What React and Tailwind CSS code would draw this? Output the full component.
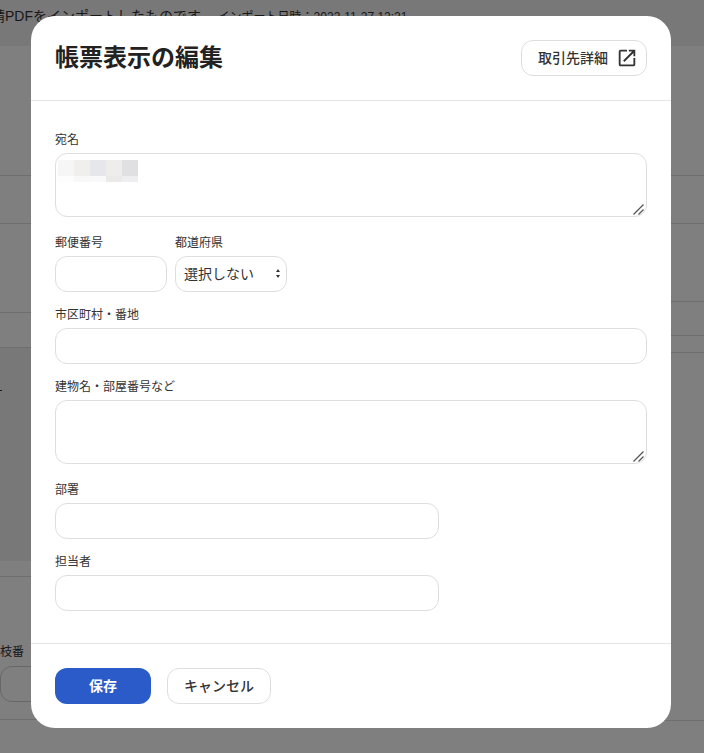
import { MdOpenInNew } from "react-icons/md";

const font = { fontFamily: '"Liberation Sans", "Noto Sans CJK JP", sans-serif' };

const fieldClass =
  "block w-full rounded-xl border border-[#dedede] bg-white px-2 text-sm text-[#333] outline-none";

function Label({ children }) {
  return <label className="mb-1 block h-5 pt-0.5 text-xs leading-[18px] text-[#333]">{children}</label>;
}

function Field({ label, className = "" }) {
  return (
    <div className={className}>
      <Label>{label}</Label>
      <input type="text" className={`${fieldClass} h-9`} />
    </div>
  );
}

function TextArea({ children }) {
  return (
    <div className="relative">
      <textarea className={`${fieldClass} h-16 resize-none py-1.5`} />
      {children}
      <svg
        className="pointer-events-none absolute bottom-0 right-0"
        width="16"
        height="16"
        viewBox="0 0 16 16"
        fill="none"
        stroke="#555"
        strokeWidth="1.3"
      >
        <path d="M2.5 13.5 12.5 3.5M7.5 13.5 12.5 8.5" />
      </svg>
    </div>
  );
}

function Mosaic() {
  const top = ["bg-[#f6f6f6]", "bg-[#f0efee]", "bg-[#e6e7ea]", "bg-[#eeedeb]", "bg-[#e0e0e3]"];
  const bottom = ["bg-[#fdfdfd]", "bg-[#f8f8f8]", "bg-[#f9f9f9]", "bg-[#ebeae8]", "bg-[#eeeef0]"];
  return (
    <div className="pointer-events-none absolute left-[3px] top-[7px] w-20">
      <div className="flex h-4">
        {top.map((c, i) => (
          <div key={i} className={`w-4 ${c}`} />
        ))}
      </div>
      <div className="flex h-1.5">
        {bottom.map((c, i) => (
          <div key={i} className={`w-4 ${c}`} />
        ))}
      </div>
    </div>
  );
}

function PageBehind() {
  return (
    <div className="h-[753px] overflow-hidden bg-white text-sm text-[#333]">
      <div className="h-[46px] overflow-hidden bg-[#f0f0f0] pt-[5px]">
        <p className="-ml-[9px] whitespace-nowrap leading-[22px]">
          請PDFをインポートしたものです。
          <span className="ml-1 text-xs">インポート日時：2022-11-27 12:21</span>
        </p>
      </div>
      <div className="flex">
        <div className="w-[352px]">
          <div className="h-[130px] border-b border-[#dedede]" />
          <div className="h-[48px] border-b border-[#dedede]" />
          <div className="h-[89px] border-b border-[#dedede]" />
          <div className="h-[35px] border-b border-[#dedede]" />
          <div className="h-[213px] bg-[#f0f0f0] pt-[42px]">
            <div className="h-px w-0.5 bg-[#333]" />
          </div>
          <div className="h-[16px] border-b border-[#dedede]" />
          <div className="h-[143px] border-b border-[#dedede] pt-[65px]">
            <p className="h-[20px] text-xs leading-[20px]">枝番</p>
            <div className="mt-[4px] h-9 w-[200px] rounded-xl border border-[#cfcfcf]" />
          </div>
        </div>
        <div className="flex-1">
          <div className="h-[130px] border-b border-[#dedede]" />
          <div className="h-[48px] border-b border-[#dedede]" />
          <div className="h-[78px] border-b border-[#dedede]" />
          <div className="h-[34px] border-b border-[#dedede]" />
          <div className="h-[17px] border-b border-[#dedede]" />
          <div className="h-[368px] border-b border-[#dedede]" />
        </div>
      </div>
    </div>
  );
}

export default function App() {
  return (
    <div className="relative h-[753px] w-full overflow-hidden" style={font}>
      <PageBehind />
      <div className="absolute inset-0 bg-black/50 pl-[31px] pt-4">
        <div className="flex h-[712px] w-[640px] flex-col rounded-3xl bg-white">
          <div className="flex h-[85px] shrink-0 items-start justify-between border-b border-[#e6e6e6] px-6 pt-6">
            <h2 className="text-2xl leading-9 font-bold text-[#222]">帳票表示の編集</h2>
            <button className="flex h-9 w-[126px] items-center gap-[8px] rounded-xl border border-[#dedede] bg-white pl-4 text-sm font-medium text-[#333]">
              取引先詳細
              <MdOpenInNew className="h-[22px] w-[22px] text-[#333]" />
            </button>
          </div>

          <div className="flex-1 px-6 pt-7">
            <div>
              <Label>宛名</Label>
              <TextArea>
                <Mosaic />
              </TextArea>
            </div>

            <div className="mt-[15px] flex gap-2">
              <Field label="郵便番号" className="w-28" />
              <div className="w-28">
                <Label>都道府県</Label>
                <div className="relative">
                  <select
                    className="block h-9 w-full appearance-none rounded-xl border border-[#dedede] bg-white px-2 text-sm text-[#333]"
                    defaultValue=""
                  >
                    <option value="">選択しない</option>
                  </select>
                  <svg
                    className="pointer-events-none absolute right-[7px] top-[13px]"
                    width="4"
                    height="10"
                    viewBox="0 0 4 10"
                    fill="#333"
                  >
                    <path d="M2 0 4 3H0ZM0 6H4L2 9Z" />
                  </svg>
                </div>
              </div>
            </div>

            <Field label="市区町村・番地" className="mt-3" />

            <div className="mt-3">
              <Label>建物名・部屋番号など</Label>
              <TextArea />
            </div>

            <Field label="部署" className="mt-[15px] w-96" />
            <Field label="担当者" className="mt-3 w-96" />
          </div>

          <div className="flex h-[85px] shrink-0 items-start gap-4 border-t border-[#e6e6e6] px-6 pt-6">
            <button className="h-9 w-24 rounded-xl bg-[#2a5bc8] text-sm font-bold text-white">保存</button>
            <button className="h-9 w-[104px] rounded-xl border border-[#dedede] bg-white text-sm font-medium text-[#333]">
              キャンセル
            </button>
          </div>
        </div>
      </div>
    </div>
  );
}
